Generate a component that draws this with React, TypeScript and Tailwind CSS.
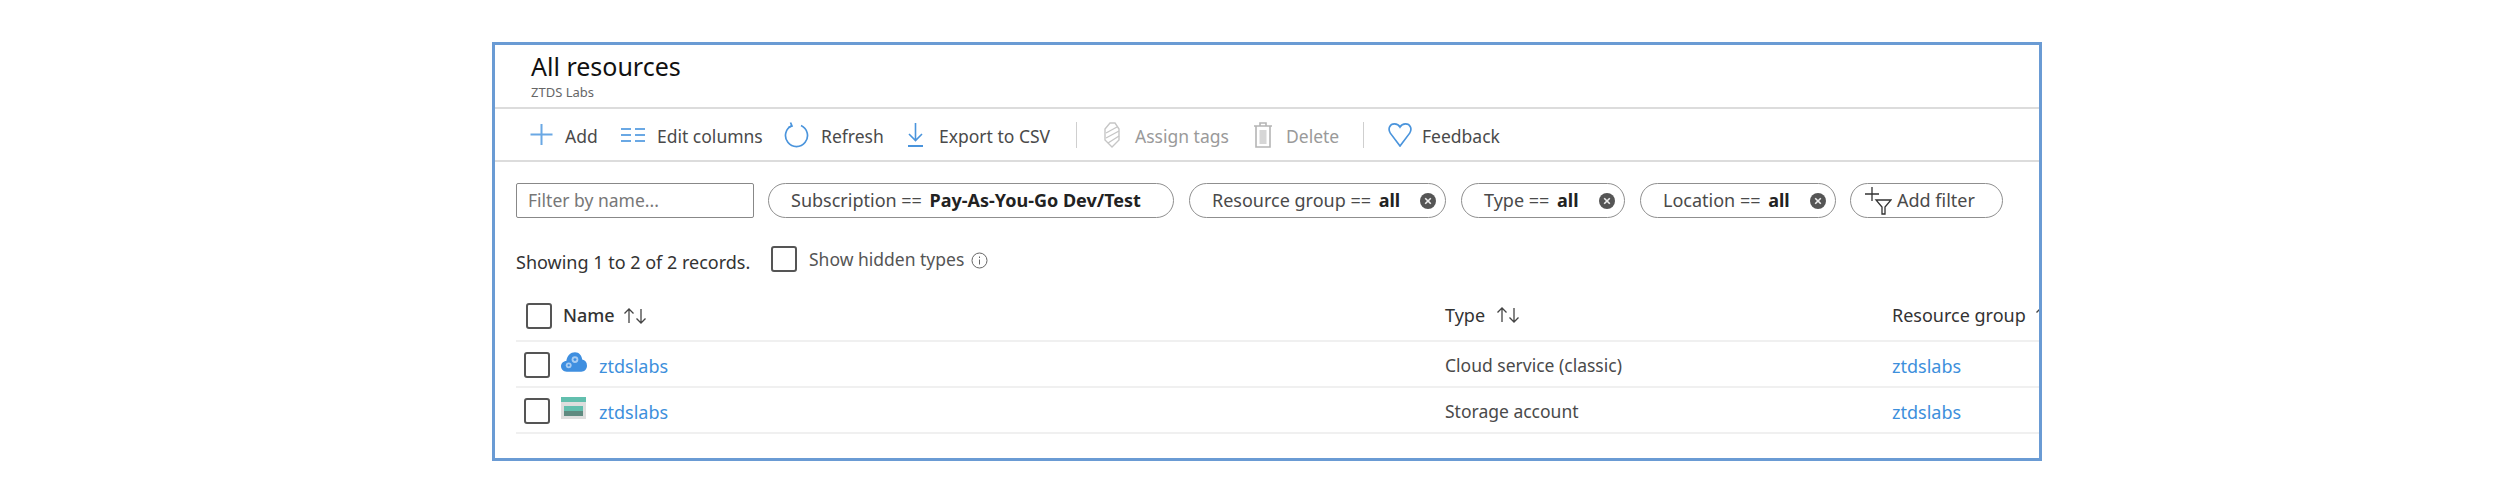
import { ReactNode } from 'react';

const font = { fontFamily: '"Noto Sans", "Open Sans", sans-serif' };

function Plus() {
  return (
    <svg width="23" height="23" viewBox="0 0 23 23" fill="none" stroke="#6aa8e4" strokeWidth="2">
      <path d="M11.500 1v21M0.500 11.500h22" />
    </svg>
  );
}

function Columns() {
  return (
    <svg width="24" height="16" viewBox="0 0 24 16" fill="none" stroke="#6aa8e4" strokeWidth="2">
      <path d="M0 2h10M0 8h10M0 14h10M14 2h10M14 8h10M14 14h10" />
    </svg>
  );
}

function Refresh() {
  return (
    <svg width="25" height="26" viewBox="0 0 25 26" fill="none" stroke="#4a94dc" strokeWidth="1.700">
      <path d="M17 3.500a11 11 0 1 1-9 0" />
      <path d="M6.500 0.500l1.500 3.600-3.600 1.400" />
    </svg>
  );
}

function Download() {
  return (
    <svg width="15" height="24" viewBox="0 0 15 24" fill="none" stroke="#4a94dc" strokeWidth="1.600">
      <path d="M7.500 0v17M1 11l6.500 6.500L14 11" />
      <path d="M0 23h15" strokeWidth="2" />
    </svg>
  );
}

function Tag() {
  return (
    <svg width="20" height="26" viewBox="0 0 20 26" fill="none" stroke="#c6c6c6" strokeWidth="1.400">
      <path d="M10 25L3 18V7l5-6h5l4 6v11z" />
      <path d="M4 11l11-6M4 16l13-7M6 21l11-7" />
    </svg>
  );
}

function Trash() {
  return (
    <svg width="20" height="26" viewBox="0 0 20 26" fill="none" stroke="#b5b5b5" strokeWidth="1.600">
      <path d="M1 4h18M7 4V1h6v3M3 4v21h14V4" />
      <rect x="6.500" y="8" width="7" height="14" fill="#d6d6d6" stroke="none" />
    </svg>
  );
}

function Heart() {
  return (
    <svg width="24" height="24" viewBox="0 0 26 26" fill="none" stroke="#4a94dc" strokeWidth="1.800">
      <path d="M13 25L2.500 11C-0.500 6 2 1 7 1c2.700 0 4.800 1.200 6 3.400C14.200 2.200 16.300 1 19 1c5 0 7.500 5 4.500 10z" />
    </svg>
  );
}

function CloseDot() {
  return (
    <svg width="16" height="16" viewBox="0 0 16 16" className="shrink-0">
      <circle cx="8" cy="8" r="8" fill="#555" />
      <path d="M5.200 5.200l5.600 5.600M10.800 5.200l-5.600 5.600" stroke="#eee" strokeWidth="1.600" />
    </svg>
  );
}

function AddFilterIcon() {
  return (
    <svg width="27" height="28" viewBox="0 0 27 28" fill="none" stroke="#333" strokeWidth="1.300" className="shrink-0">
      <path d="M7 0v14M0 7h14" />
      <path d="M11 13h15l-6 7v7h-3v-7z" />
    </svg>
  );
}

function InfoIcon() {
  return (
    <svg width="17" height="17" viewBox="0 0 17 17" fill="none" stroke="#666" strokeWidth="1">
      <circle cx="8.500" cy="8.500" r="7.500" />
      <path d="M8.500 7.500v5M8.500 4.500v1.500" />
    </svg>
  );
}

function SortArrows() {
  return (
    <svg width="25" height="16" viewBox="0 0 25 16" fill="none" stroke="#444" strokeWidth="1.300">
      <path d="M6 15V1M1.500 5.500L6 1l4.500 4.500" />
      <path d="M18 1v14M13.500 10.500L18 15l4.500-4.500" />
    </svg>
  );
}

function CloudIcon() {
  return (
    <svg width="27" height="20" viewBox="0 0 27 20">
      <path d="M6 20C2.500 20 0 17.500 0 14.500S2.500 9 5.500 9C6.500 3.500 10 0 14.500 0c4.500 0 7 3.500 7.500 7.500 3 .5 5 3 5 6.300 0 3.500-2.500 6.200-6 6.200z" fill="#3f8fe0" />
      <circle cx="14.500" cy="7.500" r="3.500" fill="#a9cdf2" />
      <circle cx="14.500" cy="7.500" r="1.500" fill="#3f8fe0" />
      <circle cx="8" cy="13.500" r="3" fill="#a9cdf2" />
      <circle cx="8" cy="13.500" r="1.200" fill="#3f8fe0" />
    </svg>
  );
}

function StorageIcon() {
  return (
    <svg width="26" height="22" viewBox="0 0 26 22">
      <rect x="0" y="0" width="25" height="5" fill="#62bfae" />
      <rect x="0" y="5" width="25" height="17" fill="#dedede" />
      <rect x="3" y="9" width="19" height="5" fill="#62bfae" />
      <rect x="3" y="14" width="19" height="5" fill="#5f8a80" />
    </svg>
  );
}

function Checkbox() {
  return <div className="h-[26px] w-[26px] shrink-0 rounded-[3px] border-2 border-[#555]" />;
}

function ToolbarButton({ icon, label, iconWidth, gap, width, muted }: { icon: ReactNode; label: string; iconWidth: string; gap: string; width: string; muted?: boolean }) {
  return (
    <div className={`flex items-center ${width} ${gap}`}>
      <div className={`flex justify-center ${iconWidth}`}>{icon}</div>
      <span className={`pt-[3px] ${muted ? 'text-[#9a9a9a]' : 'text-[#4a4a4a]'}`}>{label}</span>
    </div>
  );
}

function Pill({ width, label, value, closable }: { width: string; label: string; value: string; closable?: boolean }) {
  return (
    <div className={`flex h-[35px] items-center justify-between rounded-full border border-[#8f8f8f] pl-[22px] pr-[9px] ${width}`}>
      <span className="whitespace-pre text-[#4a4a4a]">
        {label} <b className="ml-[3px] font-bold text-[#222]">{value}</b>
      </span>
      {closable && <CloseDot />}
    </div>
  );
}

function Row({ icon, type }: { icon: ReactNode; type: string }) {
  return (
    <div className="ml-[21px] grid h-[46px] grid-cols-[929px_447px_1fr] border-b-2 border-[#f0f0f0] text-[18px]">
      <div className="flex items-center">
        <div className="ml-[8px] mt-[1px]"><Checkbox /></div>
        <div className="ml-[11px] mb-[5px] flex w-[26px] justify-center">{icon}</div>
        <a className="ml-[12px] pt-[5px] text-[#3d8fdc]">ztdslabs</a>
      </div>
      <div className="flex items-center pt-[3px] text-[17.500px] text-[#4a4a4a]">{type}</div>
      <div className="flex items-center pt-[5px]"><a className="text-[#3d8fdc]">ztdslabs</a></div>
    </div>
  );
}

export default function App() {
  return (
    <div className="h-[497px] w-[2500px] overflow-hidden bg-white pl-[492px] pt-[42px]" style={font}>
      <div className="h-[419px] w-[1550px] overflow-hidden border-[3px] border-[#6a9bd4]">
        {/* Title */}
        <div className="h-[64px] border-b-2 border-[#dcdcdc] pl-[36px] pt-[4px]">
          <h1 className="text-[25px] leading-[34px] text-[#111]">All resources</h1>
          <p className="mt-[2px] text-[13px] leading-[14px] text-[#666]">ZTDS Labs</p>
        </div>

        {/* Toolbar */}
        <div className="flex h-[53px] items-center border-b-2 border-[#dcdcdc] pl-[35px] text-[17.500px]">
          <ToolbarButton icon={<Plus />} label="Add" iconWidth="w-[23px]" gap="gap-[12px]" width="w-[91px]" />
          <ToolbarButton icon={<Columns />} label="Edit columns" iconWidth="w-[24px]" gap="gap-[12px]" width="w-[163px]" />
          <ToolbarButton icon={<Refresh />} label="Refresh" iconWidth="w-[25px]" gap="gap-[12px]" width="w-[124px]" />
          <ToolbarButton icon={<Download />} label="Export to CSV" iconWidth="w-[15px]" gap="gap-[16px]" width="w-[168px]" />
          <div className="h-[26px] w-px bg-[#cfcfcf]" />
          <div className="ml-[25px]">
            <ToolbarButton icon={<Tag />} label="Assign tags" iconWidth="w-[20px]" gap="gap-[13px]" width="w-[151px]" muted />
          </div>
          <ToolbarButton icon={<Trash />} label="Delete" iconWidth="w-[20px]" gap="gap-[13px]" width="w-[110px]" muted />
          <div className="h-[26px] w-px bg-[#cfcfcf]" />
          <div className="ml-[23px]">
            <ToolbarButton icon={<Heart />} label="Feedback" iconWidth="w-[26px]" gap="gap-[9px]" width="w-[120px]" />
          </div>
        </div>

        {/* Filters */}
        <div className="mt-[21px] flex items-center pl-[21px] text-[18px]">
          <div className="flex h-[35px] w-[238px] items-center rounded-[2px] border border-[#888] pl-[11px] text-[17.500px] text-[#777]">Filter by name...</div>
          <div className="ml-[14px] flex gap-[15px]">
            <Pill width="w-[406px]" label="Subscription ==" value="Pay-As-You-Go Dev/Test" />
            <Pill width="w-[257px]" label="Resource group ==" value="all" closable />
            <Pill width="w-[164px]" label="Type ==" value="all" closable />
            <Pill width="w-[196px]" label="Location ==" value="all" closable />
            <div className="-ml-[1px] flex h-[35px] w-[153px] items-center gap-[5px] rounded-full border border-[#8f8f8f] pl-[14px] text-[#4a4a4a]">
              <AddFilterIcon />
              <span>Add filter</span>
            </div>
          </div>
        </div>

        {/* Record count */}
        <div className="mt-[28px] flex h-[26px] items-center pl-[21px] text-[18px]">
          <span className="mt-[6px] w-[255px] whitespace-nowrap text-[#333]">Showing 1 to 2 of 2 records.</span>
          <Checkbox />
          <span className="ml-[12px] text-[17.500px] text-[#555]">Show hidden types</span>
          <span className="ml-[7px] mt-[2px]"><InfoIcon /></span>
        </div>

        {/* Table */}
        <div className="ml-[21px] mt-[30px] grid h-[40px] grid-cols-[929px_447px_1fr] items-start border-b-2 border-[#f0f0f0] text-[18px] text-[#333]">
          <div className="flex items-center">
            <div className="ml-[10px]"><Checkbox /></div>
            <span className="ml-[11px] font-medium">Name</span>
            <span className="ml-[8px]"><SortArrows /></span>
          </div>
          <div className="flex h-[26px] items-center">
            <span>Type</span>
            <span className="ml-[11px]"><SortArrows /></span>
          </div>
          <div className="flex h-[26px] items-center whitespace-nowrap">
            <span>Resource group</span>
            <span className="ml-[9px]"><SortArrows /></span>
          </div>
        </div>
        <Row icon={<CloudIcon />} type="Cloud service (classic)" />
        <Row icon={<StorageIcon />} type="Storage account" />
      </div>
    </div>
  );
}
